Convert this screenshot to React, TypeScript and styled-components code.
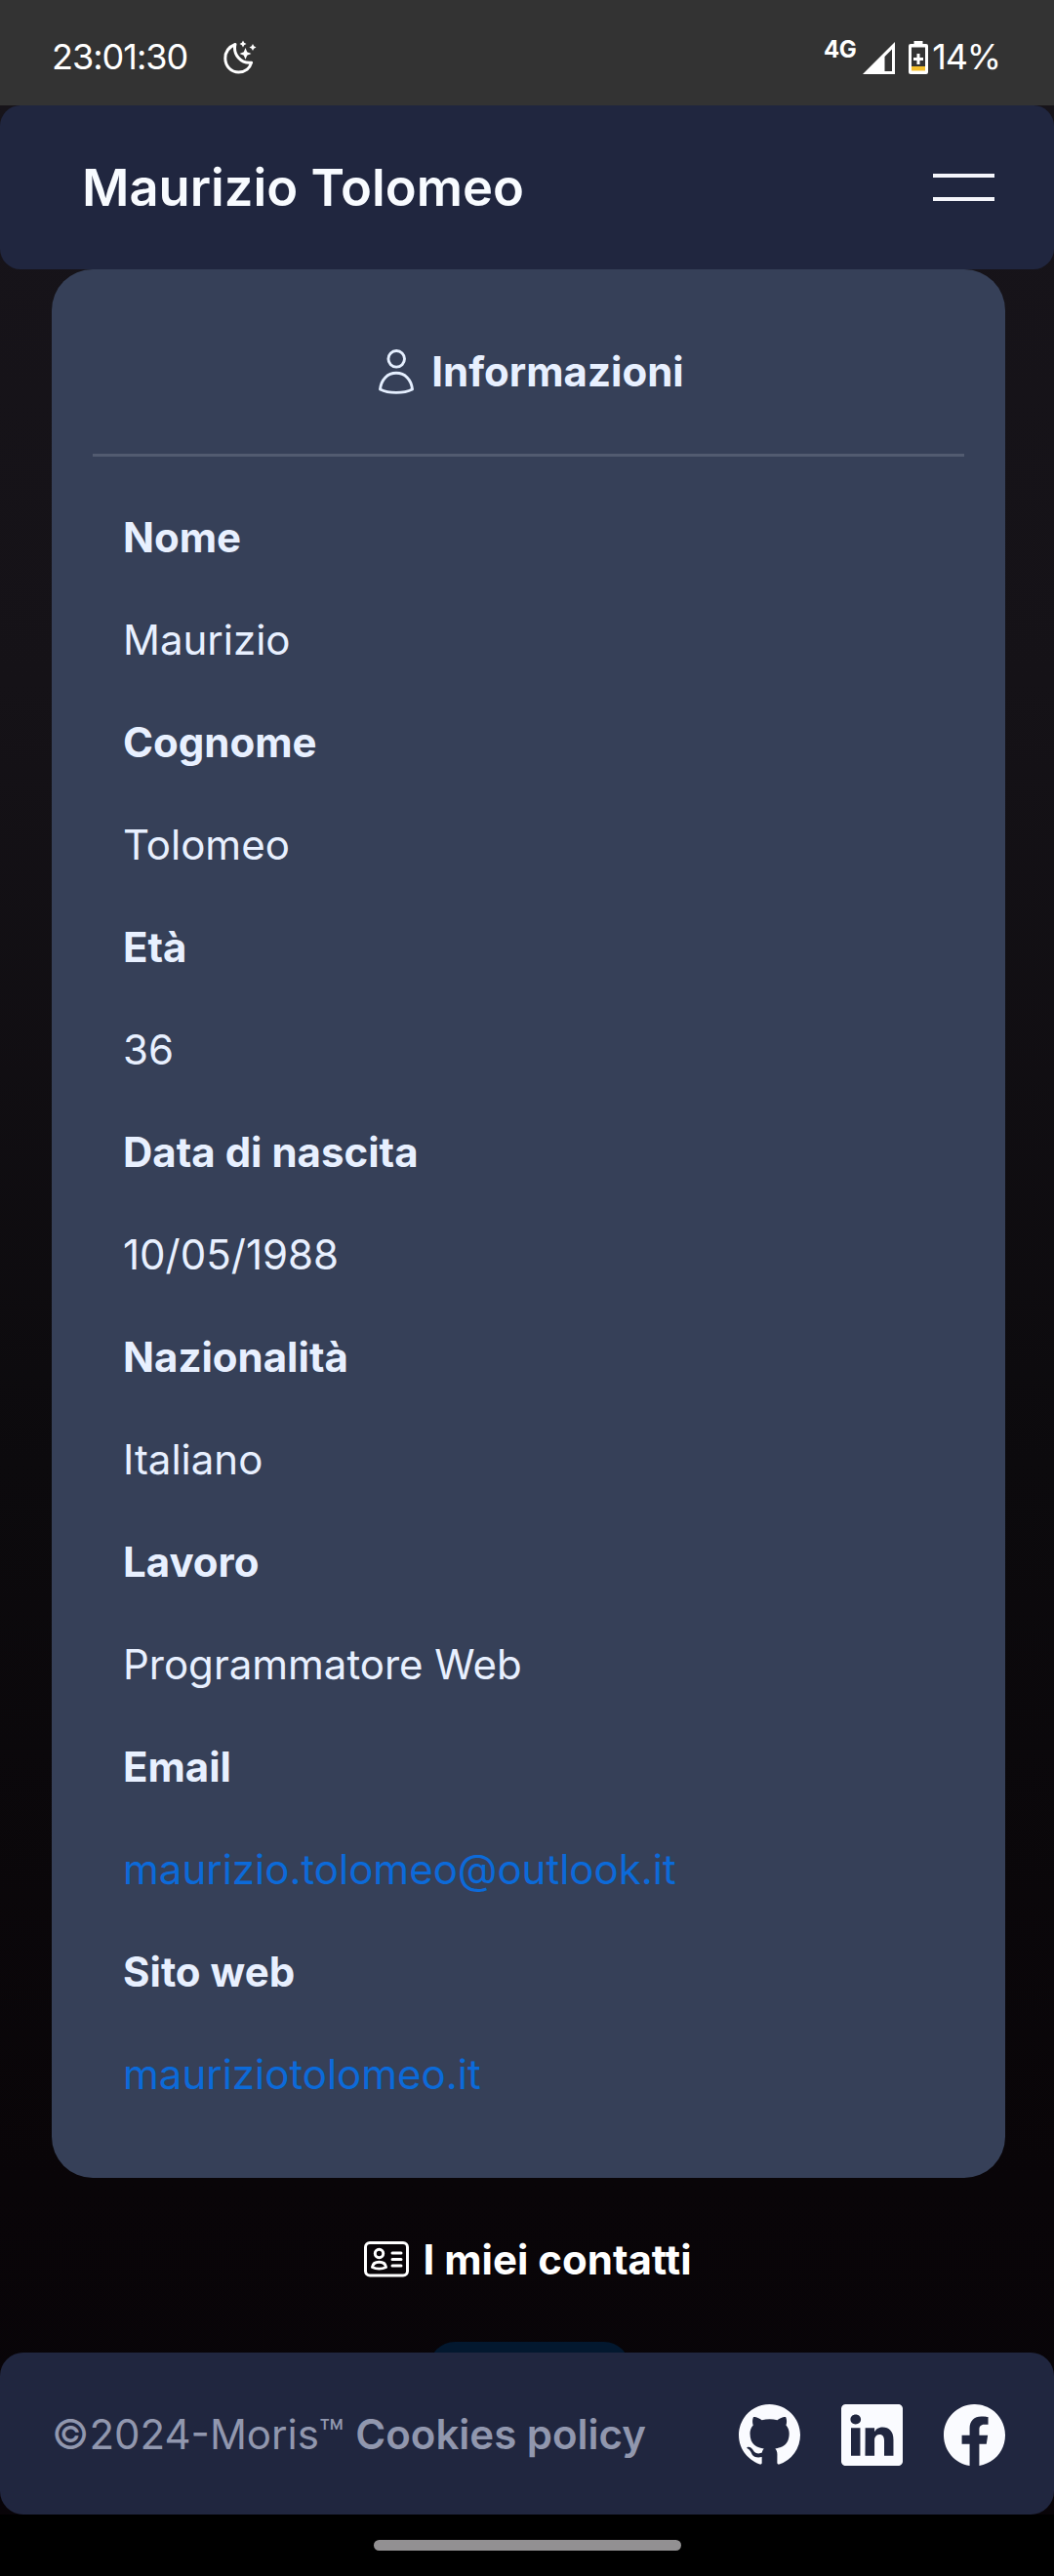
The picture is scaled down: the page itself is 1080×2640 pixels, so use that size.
import React from "react";
import styled, { createGlobalStyle } from "styled-components";
import { BsGithub, BsLinkedin, BsFacebook } from "react-icons/bs";

const GlobalStyle = createGlobalStyle`
  * { box-sizing: border-box; }
  body { margin: 0; background: #000; }
`;

const Screen = styled.div`
  width: 1080px;
  height: 2640px;
  display: flex;
  flex-direction: column;
  overflow: hidden;
  font-family: Inter, Roboto, sans-serif;
  font-size: 42px;
  line-height: 1.2;
  color: #fff;
  background: linear-gradient(180deg, #17141a 108px, #151217 700px, #0c0a0d 1500px, #090508 2232px, #080408 2577px);
`;

const StatusBar = styled.header`
  flex: 0 0 108px;
  display: flex;
  align-items: center;
  justify-content: space-between;
  padding: 10px 55px 0 53px;
  background: #333;
  font-size: 36px;
`;

const StatusGroup = styled.div`
  display: flex;
  align-items: center;
`;

const Clock = styled.span`
  width: 176px;
  letter-spacing: -1px;
`;

const Network = styled.span`
  align-self: flex-start;
  margin-right: 7px;
  font-size: 24px;
  line-height: 28px;
  font-weight: 700;
  letter-spacing: -0.5px;
`;

const Battery = styled.span`
  letter-spacing: -1.2px;
  margin-left: 4px;
`;

const Navbar = styled.nav`
  flex: 0 0 168px;
  display: flex;
  align-items: center;
  justify-content: space-between;
  padding: 0 61px 0 84px;
  border-radius: 21px;
  background: #20263f;
`;

const Title = styled.h1`
  margin: 0;
  font-size: 52.5px;
  font-weight: 600;
  color: #f8fbff;
`;

const MenuButton = styled.button`
  display: flex;
  flex-direction: column;
  gap: 20px;
  width: 63px;
  padding: 0;
  border: 0;
  background: none;
`;

const MenuLine = styled.span`
  height: 4px;
  background: #f4f5fb;
`;

const InfoCard = styled.section`
  flex: 0 0 1956px;
  margin: 0 50px 0 53px;
  padding: 0 42px;
  border-radius: 42px;
  background: #364058;
`;

const SectionTitle = styled.h2<{ $height: number; $color: string }>`
  display: flex;
  flex: none;
  align-items: center;
  justify-content: center;
  height: ${(p) => p.$height}px;
  margin: 0;
  font-size: 42px;
  font-weight: 700;
  color: ${(p) => p.$color};
`;

const TitleContent = styled.span<{ $gap: number; $top: number; $left: number }>`
  display: flex;
  align-items: center;
  gap: ${(p) => p.$gap}px;
  padding: ${(p) => p.$top}px 0 0 ${(p) => p.$left}px;
`;

const Divider = styled.hr`
  height: 3px;
  margin: 0 0 30px;
  border: 0;
  background: #525b70;
`;

const Details = styled.dl`
  margin: 0;
  padding: 0 31px;
`;

const Label = styled.dt`
  height: 105px;
  line-height: 105px;
  font-weight: 700;
  color: #e8f0ff;
`;

const Value = styled.dd`
  height: 105px;
  margin: 0;
  line-height: 105px;
  color: #e8f0ff;
`;

const Link = styled.a`
  color: #0c6ad9;
  text-decoration: none;
`;

const Contacts = styled.section`
  flex: 0 0 179px;
  height: 179px;
  display: flex;
  flex-direction: column;
  align-items: center;
  overflow: hidden;
`;

const ContactButton = styled.button`
  flex: 0 0 84px;
  width: 205px;
  margin-left: 4px;
  border: 0;
  border-radius: 26px;
  background: #03182f;
`;

const Footer = styled.footer`
  flex: 0 0 166px;
  display: flex;
  align-items: center;
  justify-content: space-between;
  padding: 2px 50px 0 53px;
  border-radius: 24px;
  background: #20263f;
`;

const Copyright = styled.span`
  color: #9197ae;
`;

const PolicyLink = styled.span`
  font-weight: 600;
`;

const Socials = styled.div`
  display: flex;
  gap: 42px;
  color: #fafbff;
`;

const GestureBar = styled.div`
  flex: 0 0 63px;
  display: flex;
  justify-content: center;
  padding-top: 26px;
  background: #000;
`;

const Handle = styled.span`
  width: 315px;
  height: 11px;
  border-radius: 6px;
  background: #929092;
`;

const StatusSpacer = styled.span<{ $w: number }>`
  flex: 0 0 ${(p) => p.$w}px;
`;

const rows: [string, React.ReactNode][] = [
  ["Nome", "Maurizio"],
  ["Cognome", "Tolomeo"],
  ["Età", "36"],
  ["Data di nascita", "10/05/1988"],
  ["Nazionalità", "Italiano"],
  ["Lavoro", "Programmatore Web"],
  ["Email", <Link key="m" href="mailto:maurizio.tolomeo@outlook.it">maurizio.tolomeo@outlook.it</Link>],
  ["Sito web", <Link key="w" href="#">mauriziotolomeo.it</Link>],
];

const MoonIcon = () => (
  <svg width="34" height="36" viewBox="0 0 34 36" fill="none">
    <path d="M12 4.5C5.800 7 1.800 12.300 1.800 18.800C1.800 27 8 33 15.500 33C22 33 27 29 28.600 23.200C18 24.500 9.500 15 12 4.500Z" stroke="#fff" strokeWidth="3" strokeLinejoin="round" />
    <path d="M22.500 8L24.200 12.300L28.500 14L24.200 15.700L22.500 20L20.800 15.700L16.500 14L20.800 12.300ZM20 0.500L21.200 2.800L23.500 4L21.200 5.200L20 7.500L18.800 5.200L16.500 4L18.800 2.800ZM30 4L31.200 6.300L33.500 7.500L31.200 8.700L30 11L28.800 8.700L26.500 7.500L28.800 6.300Z" fill="#fff" />
  </svg>
);

const SignalIcon = () => (
  <svg width="33" height="33" viewBox="0 0 33 33">
    <path fillRule="evenodd" d="M0 33L33 0V33ZM22.500 15V30H30V7.500Z" fill="#fff" />
  </svg>
);

const BatteryIcon = () => (
  <svg width="20" height="34" viewBox="0 0 20 34">
    <path d="M5.500 0H14.500V3H18Q20 3 20 5V32Q20 34 18 34H2Q0 34 0 32V5Q0 3 2 3H5.500Z" fill="#fff" />
    <path d="M3 6.500H17V26H3Z" fill="#333" />
    <path d="M3 26H17V30.500H3Z" fill="#f4bf2c" />
    <path d="M8.500 13H11.500V17H15V20H11.500V24H8.500V20H5V17H8.500Z" fill="#fff" />
  </svg>
);

const PersonIcon = () => (
  <svg width="36" height="46" viewBox="0 0 36 46" fill="none" stroke="#e5efff" strokeWidth="2.9" strokeLinejoin="round">
    <circle cx="18.200" cy="9.800" r="8.300" />
    <path d="M18 24.300C9 24.300 2.500 31 1.500 41C6 43.300 11.500 44.400 18 44.400S30 43.300 34.500 41C33.500 31 27 24.300 18 24.300Z" />
  </svg>
);

const ContactCardIcon = () => (
  <svg width="46" height="37" viewBox="0 0 46 37" fill="none" stroke="#fff" strokeWidth="3" strokeLinecap="round" strokeLinejoin="round">
    <rect x="1.500" y="1.500" width="43" height="33.500" rx="4.500" />
    <circle cx="15.500" cy="12.500" r="4.200" />
    <path d="M8.500 26.500C9 23 11.500 21.300 15.500 21.300S22 23 22.500 26.500C18.500 28.500 12.500 28.500 8.500 26.500Z" />
    <path d="M29 12H38M29 18.500H38M29 25H38" />
  </svg>
);

export default function App() {
  return (
    <Screen>
      <GlobalStyle />
      <StatusBar>
        <StatusGroup>
          <Clock>23:01:30</Clock>
          <MoonIcon />
        </StatusGroup>
        <StatusGroup>
          <Network>4G</Network>
          <SignalIcon />
          <StatusSpacer $w={14} />
          <BatteryIcon />
          <Battery>14%</Battery>
        </StatusGroup>
      </StatusBar>
      <Navbar>
        <Title>Maurizio Tolomeo</Title>
        <MenuButton aria-label="Menu">
          <MenuLine />
          <MenuLine />
        </MenuButton>
      </Navbar>
      <InfoCard>
        <SectionTitle $height={189} $color="#e8f0ff">
          <TitleContent $gap={18} $top={22} $left={6}>
            <PersonIcon />
            Informazioni
          </TitleContent>
        </SectionTitle>
        <Divider />
        <Details>
          {rows.map(([label, value]) => (
            <React.Fragment key={label}>
              <Label>{label}</Label>
              <Value>{value}</Value>
            </React.Fragment>
          ))}
        </Details>
      </InfoCard>
      <Contacts>
        <SectionTitle $height={168} $color="#fff">
          <TitleContent $gap={14} $top={0} $left={2}>
            <ContactCardIcon />
            I miei contatti
          </TitleContent>
        </SectionTitle>
        <ContactButton aria-label="Contatti" />
      </Contacts>
      <Footer>
        <Copyright>
          ©2024-Moris™ <PolicyLink>Cookies policy</PolicyLink>
        </Copyright>
        <Socials>
          <BsGithub size={63} />
          <BsLinkedin size={63} />
          <BsFacebook size={63} />
        </Socials>
      </Footer>
      <GestureBar>
        <Handle />
      </GestureBar>
    </Screen>
  );
}
